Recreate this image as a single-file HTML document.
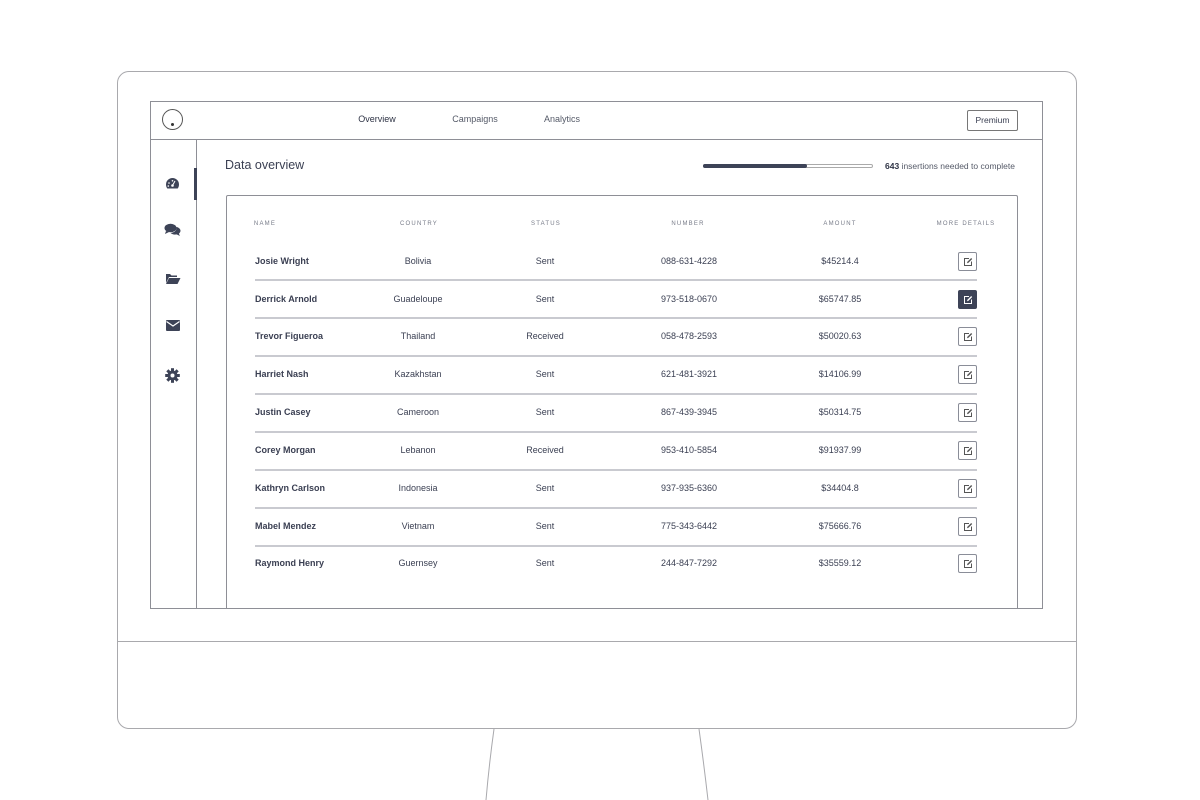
<!DOCTYPE html>
<html><head><meta charset="utf-8"><style>
*{margin:0;padding:0;box-sizing:border-box}
body{width:1200px;height:800px;background:#fff;position:relative;overflow:hidden;font-family:"Liberation Sans",sans-serif;color:#3a3f52}
.a{position:absolute}
.t{position:absolute;font-size:9px;white-space:nowrap;transform:translateX(-50%)}
.h{position:absolute;font-size:6px;letter-spacing:1.2px;color:#777b88;white-space:nowrap;transform:translateX(-50%);top:221px}
.n{position:absolute;left:255px;font-size:9px;font-weight:bold;white-space:nowrap}
.sep{position:absolute;left:255px;width:722px;height:2px;background:#c9cad0}
.btn{position:absolute;left:958px;width:19px;height:19px;border:1px solid #8a8d98;border-radius:2px;background:#fff}
.btn svg{position:absolute;left:4px;top:4px}
.btn.d{background:#3d4357;border-color:#3d4357}
</style></head><body>
<div class="a" style="left:117px;top:71px;width:960px;height:658px;border:1px solid #a9a9ad;border-radius:12px"></div>
<div class="a" style="left:118px;top:641px;width:958px;height:1px;background:#a9a9ad"></div>
<svg class="a" style="left:0;top:0" width="1200" height="800"><path d="M494 729 Q489 765 486 800 M699 729 Q704 765 708 800" stroke="#a9a9ad" fill="none"/></svg>
<div class="a" style="left:150px;top:101px;width:893px;height:508px;border:1px solid #8e8f96"></div>
<div class="a" style="left:150px;top:139px;width:893px;height:1px;background:#8e8f96"></div>
<div class="a" style="left:196px;top:140px;width:1px;height:468px;background:#8e8f96"></div>
<div class="a" style="left:194px;top:168px;width:3px;height:32px;background:#3d4357"></div>
<div class="a" style="left:162px;top:109px;width:21px;height:21px;border:1px solid #555;border-radius:50%"></div>
<div class="a" style="left:171px;top:123px;width:3px;height:3px;border-radius:50%;background:#333"></div>
<div class="t" style="left:377px;top:114px;font-size:9px;color:#2e3345">Overview</div>
<div class="t" style="left:475px;top:114px;color:#555a68">Campaigns</div>
<div class="t" style="left:562px;top:114px;color:#555a68">Analytics</div>
<div class="a" style="left:967px;top:110px;width:51px;height:21px;border:1px solid #777;border-radius:2px;font-size:8.5px;text-align:center;line-height:19px">Premium</div>
<!-- sidebar icons -->
<svg class="a" style="left:165px;top:177px" width="15" height="13" viewBox="0 0 15 13"><path d="M7.5 1A6.5 6.5 0 0 0 1 7.5c0 1.5.5 3 1.3 4h10.4c.8-1 1.3-2.5 1.3-4A6.5 6.5 0 0 0 7.5 1z" fill="#3d4357"/><circle cx="7.5" cy="8.5" r="1.3" fill="#fff"/><path d="M7.5 8.5L10 4" stroke="#fff"/><circle cx="4" cy="6" r=".8" fill="#fff"/><circle cx="7.5" cy="3.8" r=".8" fill="#fff"/><circle cx="3.3" cy="9" r=".8" fill="#fff"/></svg>
<svg class="a" style="left:164px;top:223px" width="17" height="14" viewBox="0 0 17 14"><ellipse cx="6.5" cy="5" rx="6" ry="4.3" fill="#3d4357"/><path d="M2 8l-1 3 4-2z" fill="#3d4357"/><path d="M13 4c2.2.8 3.5 2.2 3.5 3.8 0 1.1-.6 2.1-1.6 2.8l1 2.4-3.2-1.6c-.6.1-1 .2-1.7.2-1.8 0-3.4-.6-4.4-1.6 3.7-.3 6.4-2.8 5.9-6z" fill="#3d4357"/></svg>
<svg class="a" style="left:165px;top:272px" width="16" height="13" viewBox="0 0 16 13"><path d="M1 2h4l1.5 1.5H12V5H4L1 11z" fill="#3d4357"/><path d="M4 6h11.5l-3 6H1z" fill="#3d4357"/></svg>
<svg class="a" style="left:166px;top:320px" width="14" height="11" viewBox="0 0 14 11"><rect x="0" y="0" width="14" height="11" rx="1" fill="#3d4357"/><path d="M0.5 1.5L7 6l6.5-4.5" stroke="#fff" stroke-width="1.2" fill="none"/></svg>
<svg class="a" style="left:165px;top:368px" width="15" height="15" viewBox="-7.5 -7.5 15 15"><g fill="#3d4357"><circle r="5"/><rect x="-1.5" y="-7.3" width="3" height="14.6"/><rect x="-1.5" y="-7.3" width="3" height="14.6" transform="rotate(45)"/><rect x="-1.5" y="-7.3" width="3" height="14.6" transform="rotate(90)"/><rect x="-1.5" y="-7.3" width="3" height="14.6" transform="rotate(135)"/></g><circle r="2" fill="#fff"/></svg>
<div class="a" style="left:225px;top:158px;font-size:12.5px;color:#3a3f52">Data overview</div>
<div class="a" style="left:703px;top:164px;width:170px;height:4px;border:1px solid #aaa;border-radius:2px"></div>
<div class="a" style="left:703px;top:164px;width:104px;height:4px;background:#3d4357;border-radius:2px"></div>
<div class="a" style="left:885px;top:161px;font-size:8.5px;color:#555a68;white-space:nowrap"><b style="color:#2e3345">643</b> insertions needed to complete</div>
<div class="a" style="left:226px;top:195px;width:792px;height:414px;border:1px solid #8e8f96;border-bottom:none;border-radius:2px 2px 0 0"></div>
<div class="h" style="left:265px">NAME</div>
<div class="h" style="left:419px">COUNTRY</div>
<div class="h" style="left:546px">STATUS</div>
<div class="h" style="left:688px">NUMBER</div>
<div class="h" style="left:840px">AMOUNT</div>
<div class="h" style="left:966px">MORE DETAILS</div>

<div class="n" style="top:256px">Josie Wright</div><div class="t" style="left:418px;top:256px">Bolivia</div><div class="t" style="left:545px;top:256px">Sent</div><div class="t" style="left:689px;top:256px">088-631-4228</div><div class="t" style="left:840px;top:256px">$45214.4</div>
<div class="sep" style="top:279px"></div>
<div class="n" style="top:294px">Derrick Arnold</div><div class="t" style="left:418px;top:294px">Guadeloupe</div><div class="t" style="left:545px;top:294px">Sent</div><div class="t" style="left:689px;top:294px">973-518-0670</div><div class="t" style="left:840px;top:294px">$65747.85</div>
<div class="sep" style="top:317px"></div>
<div class="n" style="top:331px">Trevor Figueroa</div><div class="t" style="left:418px;top:331px">Thailand</div><div class="t" style="left:545px;top:331px">Received</div><div class="t" style="left:689px;top:331px">058-478-2593</div><div class="t" style="left:840px;top:331px">$50020.63</div>
<div class="sep" style="top:355px"></div>
<div class="n" style="top:369px">Harriet Nash</div><div class="t" style="left:418px;top:369px">Kazakhstan</div><div class="t" style="left:545px;top:369px">Sent</div><div class="t" style="left:689px;top:369px">621-481-3921</div><div class="t" style="left:840px;top:369px">$14106.99</div>
<div class="sep" style="top:393px"></div>
<div class="n" style="top:407px">Justin Casey</div><div class="t" style="left:418px;top:407px">Cameroon</div><div class="t" style="left:545px;top:407px">Sent</div><div class="t" style="left:689px;top:407px">867-439-3945</div><div class="t" style="left:840px;top:407px">$50314.75</div>
<div class="sep" style="top:431px"></div>
<div class="n" style="top:445px">Corey Morgan</div><div class="t" style="left:418px;top:445px">Lebanon</div><div class="t" style="left:545px;top:445px">Received</div><div class="t" style="left:689px;top:445px">953-410-5854</div><div class="t" style="left:840px;top:445px">$91937.99</div>
<div class="sep" style="top:469px"></div>
<div class="n" style="top:483px">Kathryn Carlson</div><div class="t" style="left:418px;top:483px">Indonesia</div><div class="t" style="left:545px;top:483px">Sent</div><div class="t" style="left:689px;top:483px">937-935-6360</div><div class="t" style="left:840px;top:483px">$34404.8</div>
<div class="sep" style="top:507px"></div>
<div class="n" style="top:521px">Mabel Mendez</div><div class="t" style="left:418px;top:521px">Vietnam</div><div class="t" style="left:545px;top:521px">Sent</div><div class="t" style="left:689px;top:521px">775-343-6442</div><div class="t" style="left:840px;top:521px">$75666.76</div>
<div class="sep" style="top:545px"></div>
<div class="n" style="top:558px">Raymond Henry</div><div class="t" style="left:418px;top:558px">Guernsey</div><div class="t" style="left:545px;top:558px">Sent</div><div class="t" style="left:689px;top:558px">244-847-7292</div><div class="t" style="left:840px;top:558px">$35559.12</div>

<div class="btn" style="top:252px"><svg width="10" height="10" viewBox="0 0 10 10"><path d="M6 1.5H1.5v7h7V4.5" stroke="#555" fill="none"/><path d="M4 6.3l.4-1.6L8.2 1l1 1-3.7 3.8z" fill="#555"/></svg></div>
<div class="btn d" style="top:290px"><svg width="10" height="10" viewBox="0 0 10 10"><path d="M6 1.5H1.5v7h7V4.5" stroke="#fff" fill="none"/><path d="M4 6.3l.4-1.6L8.2 1l1 1-3.7 3.8z" fill="#fff"/></svg></div>
<div class="btn" style="top:327px"><svg width="10" height="10" viewBox="0 0 10 10"><path d="M6 1.5H1.5v7h7V4.5" stroke="#555" fill="none"/><path d="M4 6.3l.4-1.6L8.2 1l1 1-3.7 3.8z" fill="#555"/></svg></div>
<div class="btn" style="top:365px"><svg width="10" height="10" viewBox="0 0 10 10"><path d="M6 1.5H1.5v7h7V4.5" stroke="#555" fill="none"/><path d="M4 6.3l.4-1.6L8.2 1l1 1-3.7 3.8z" fill="#555"/></svg></div>
<div class="btn" style="top:403px"><svg width="10" height="10" viewBox="0 0 10 10"><path d="M6 1.5H1.5v7h7V4.5" stroke="#555" fill="none"/><path d="M4 6.3l.4-1.6L8.2 1l1 1-3.7 3.8z" fill="#555"/></svg></div>
<div class="btn" style="top:441px"><svg width="10" height="10" viewBox="0 0 10 10"><path d="M6 1.5H1.5v7h7V4.5" stroke="#555" fill="none"/><path d="M4 6.3l.4-1.6L8.2 1l1 1-3.7 3.8z" fill="#555"/></svg></div>
<div class="btn" style="top:479px"><svg width="10" height="10" viewBox="0 0 10 10"><path d="M6 1.5H1.5v7h7V4.5" stroke="#555" fill="none"/><path d="M4 6.3l.4-1.6L8.2 1l1 1-3.7 3.8z" fill="#555"/></svg></div>
<div class="btn" style="top:517px"><svg width="10" height="10" viewBox="0 0 10 10"><path d="M6 1.5H1.5v7h7V4.5" stroke="#555" fill="none"/><path d="M4 6.3l.4-1.6L8.2 1l1 1-3.7 3.8z" fill="#555"/></svg></div>
<div class="btn" style="top:554px"><svg width="10" height="10" viewBox="0 0 10 10"><path d="M6 1.5H1.5v7h7V4.5" stroke="#555" fill="none"/><path d="M4 6.3l.4-1.6L8.2 1l1 1-3.7 3.8z" fill="#555"/></svg></div>
</body></html>
